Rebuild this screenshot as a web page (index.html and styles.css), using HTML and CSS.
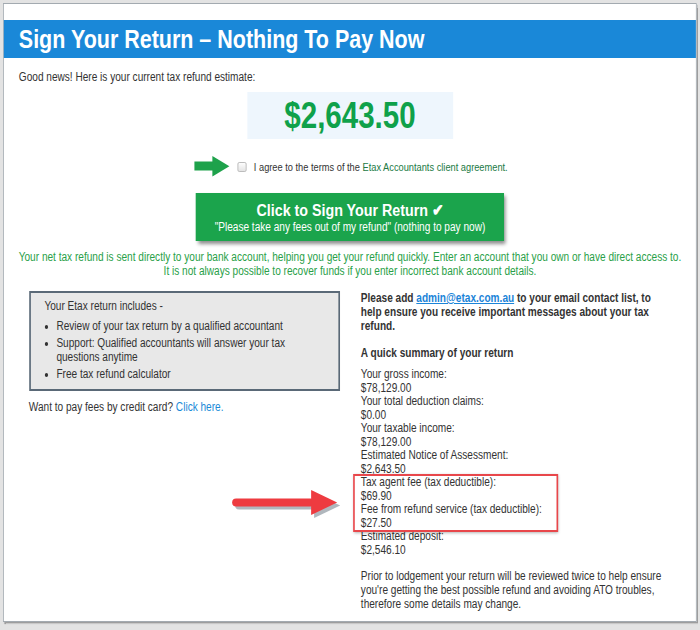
FILE: index.html
```html
<!DOCTYPE html>
<html>
<head>
<meta charset="utf-8">
<title>Sign Your Return</title>
<link rel="stylesheet" href="styles.css">
</head>
<body>
<div class="frame">
  <h1 class="banner">Sign Your Return – Nothing To Pay Now</h1>
  <p class="intro">Good news! Here is your current tax refund estimate:</p>
  <div class="refund">$2,643.50</div>

  <div class="agree">
    <svg class="agree-arrow" viewBox="0 0 38 21" preserveAspectRatio="none">
      <rect x="2" y="5.5" width="20" height="9" fill="#1ea24b"/>
      <polygon points="20,0 37,10.25 20,20.5" fill="#1ea24b"/>
    </svg>
    <span class="checkbox"></span>
    <span class="agree-text">I agree to the terms of the <a href="#">Etax Accountants client agreement.</a></span>
  </div>

  <a class="sign-btn" href="#">
    <span class="sign-main">Click to Sign Your Return ✔</span>
    <span class="sign-sub">"Please take any fees out of my refund" (nothing to pay now)</span>
  </a>

  <p class="bank-note">Your net tax refund is sent directly to your bank account, helping you get your refund quickly. Enter an account that you own or have direct access to.<br>It is not always possible to recover funds if you enter incorrect bank account details.</p>

  <div class="columns">
    <div class="col-left">
      <div class="includes">
        <p>Your Etax return includes -</p>
        <ul>
          <li>Review of your tax return by a qualified accountant</li>
          <li>Support: Qualified accountants will answer your tax questions anytime</li>
          <li>Free tax refund calculator</li>
        </ul>
      </div>
      <p class="card-pay">Want to pay fees by credit card? <a href="#">Click here.</a></p>
    </div>

    <div class="col-right">
      <p class="contact">Please add <a href="#">admin@etax.com.au</a> to your email contact list, to help ensure you receive important messages about your tax refund.</p>
      <h2 class="summary-title">A quick summary of your return</h2>
      <div class="summary">
        <div>Your gross income:</div>
        <div>$78,129.00</div>
        <div>Your total deduction claims:</div>
        <div>$0.00</div>
        <div>Your taxable income:</div>
        <div>$78,129.00</div>
        <div>Estimated Notice of Assessment:</div>
        <div>$2,643.50</div>
        <div class="fees">
          <div>Tax agent fee (tax deductible):</div>
          <div>$69.90</div>
          <div>Fee from refund service (tax deductible):</div>
          <div>$27.50</div>
          <svg class="fees-arrow" viewBox="0 0 112 30" preserveAspectRatio="none">
            <g fill="#6f7c88" opacity="0.55" transform="translate(3,3)">
              <rect x="2" y="10.5" width="82" height="8" rx="4"/>
              <polygon points="81,2 107,14.5 81,27"/>
            </g>
            <g fill="#ee3b40">
              <rect x="2" y="10.5" width="82" height="8" rx="4"/>
              <polygon points="81,2 107,14.5 81,27"/>
            </g>
          </svg>
        </div>
        <div>Estimated deposit:</div>
        <div>$2,546.10</div>
      </div>
      <p class="review">Prior to lodgement your return will be reviewed twice to help ensure you're getting the best possible refund and avoiding ATO troubles, therefore some details may change.</p>
    </div>
  </div>
</div>
</body>
</html>
```

FILE: styles.css
```css
/* the page is drawn in a narrow face: lay out at full width, then squeeze by 0.82 */
html {
  overflow: hidden;
}
body {
  box-sizing: border-box;
  width: 700px;
  height: 630px;
  margin: 0;
  padding: 3px;
  overflow: hidden;
  background: #e3e3e3;
  font-family: "Liberation Sans", Arial, sans-serif;
  font-size: 12.3px;
  color: #333;
}

.frame {
  box-sizing: border-box;
  width: 846.3px;
  height: 619px;
  background: #fff;
  border: 1px solid #a3aab0;
  border-left-width: 1.22px;
  border-right-width: 1.22px;
  box-shadow: 1.2px 2px 1px #9d9d9d;
  padding-top: 16px;
  transform: scaleX(0.82);
  transform-origin: 0 0;
}

.banner {
  margin: 0;
  padding-left: 18.3px;
  background: #1a88d8;
  color: #fff;
  font-size: 26.2px;
  font-weight: bold;
  line-height: 38px;
}

.intro {
  margin: 12px 0 0 18.3px;
  line-height: 14px;
}

.refund {
  width: 251px;
  height: 47px;
  margin: 8px auto 0;
  background: #eef6fd;
  color: #0fa14a;
  font-size: 36px;
  font-weight: bold;
  line-height: 47px;
  text-align: center;
}

.agree {
  display: flex;
  align-items: center;
  justify-content: center;
  gap: 8.5px;
  height: 21px;
  margin-top: 17px;
  font-size: 11.3px;
}
.agree-arrow {
  width: 46.3px;
  height: 21px;
}
.checkbox {
  width: 9.8px;
  height: 8px;
  border: 1px solid #b5b5b5;
  border-radius: 2px;
  background: linear-gradient(#fdfdfd, #e4e4e4);
}
.agree-text a {
  color: #217a44;
  text-decoration: none;
}

.sign-btn {
  display: flex;
  flex-direction: column;
  align-items: center;
  justify-content: center;
  width: 375.6px;
  height: 48px;
  margin: 16px auto 0;
  background: #1ba44c;
  color: #fff;
  text-decoration: none;
  box-shadow: 2.4px 3px 4px rgba(0, 0, 0, 0.45);
}
.sign-main {
  font-size: 17.4px;
  font-weight: bold;
  line-height: 19px;
}
.sign-sub {
  font-size: 12.3px;
  line-height: 14px;
}

.bank-note {
  margin: 9px 0 0;
  color: #2a9f49;
  line-height: 14px;
  text-align: center;
}

.columns {
  display: grid;
  grid-template-columns: 379.3px 372px;
  column-gap: 25.6px;
  margin-top: 13px;
  padding-left: 30.5px;
}

.includes {
  background: #e8e8e8;
  border: 2px solid #5a6977;
  border-left-width: 2.44px;
  border-right-width: 2.44px;
  padding: 6px 24px 8px 17px;
  line-height: 14px;
}
.includes p {
  margin: 0;
}
.includes ul {
  margin: 6px 0 0;
  padding-left: 14.6px;
}
.includes li + li {
  margin-top: 3px;
}

.card-pay {
  margin: 9px 0 0;
  line-height: 14px;
}
.card-pay a {
  color: #1a8ad8;
  text-decoration: none;
}

.contact {
  margin: 0;
  font-weight: bold;
  line-height: 14px;
}
.contact a {
  color: #1b84d8;
}

.summary-title {
  margin: 13px 0 0;
  font-size: 12.3px;
  font-weight: bold;
  line-height: 14px;
}

.summary {
  margin-top: 8px;
  line-height: 13.5px;
}

.fees {
  position: relative;
}
.fees::after {
  content: "";
  position: absolute;
  left: -9.8px;
  top: -2px;
  bottom: -2px;
  width: 250px;
  box-sizing: border-box;
  border: 2px solid #e8474b;
  border-left-width: 2.44px;
  border-right-width: 2.44px;
  box-shadow: 1.2px 1px 3px rgba(0, 0, 0, 0.3);
}
.fees-arrow {
  position: absolute;
  left: -159.8px;
  top: 12px;
  width: 136.6px;
  height: 30px;
}

.review {
  margin: 12px 0 0;
  line-height: 14px;
}
```
